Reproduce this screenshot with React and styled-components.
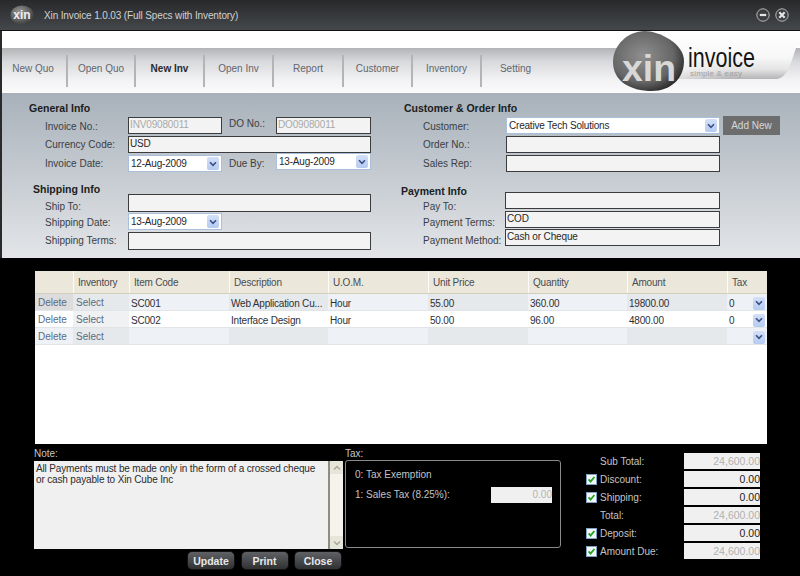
import React from 'react'
import styled, { createGlobalStyle } from 'styled-components'

const GlobalStyle = createGlobalStyle`
  html, body { margin: 0; padding: 0; background: #000; }
  body { font-family: "Liberation Sans", Arial, sans-serif; font-size: 10px; }
`

const Window = styled.div`
  position: relative;
  width: 800px;
  height: 576px;
  background: #000;
  overflow: hidden;
  color: #2c2f33;
`

const TitleBar = styled.div`
  display: flex;
  align-items: center;
  height: 31px;
  padding: 0 11px 0 10px;
  box-sizing: border-box;
  background: linear-gradient(#27292b, #45484b);
  border-bottom: 1px solid #111;
`

const TitleText = styled.div`
  margin-left: 10px;
  flex: 1;
  color: #d0d2d3;
  letter-spacing: -0.13px;
`

const WinControls = styled.div`
  display: flex;
  gap: 5px;
`

const Header = styled.div`
  position: relative;
  height: 62px;
  background: #fff;
  padding-top: 17px;
  box-sizing: border-box;
  box-shadow: inset 2px 0 0 #2a2a2a;
`

const Nav = styled.nav`
  display: flex;
  height: 45px;
  box-sizing: border-box;
  padding-top: 7px;
  background: linear-gradient(#b3b4b6 0, #d8d9dc 30%, #f2f2f4 70%, #fbfbfc 100%);
  box-shadow: inset 2px 0 0 #2a2a2a;
`

const NavItem = styled.div`
  width: ${(p) => p.$w}px;
  height: 32px;
  line-height: 27px;
  box-sizing: border-box;
  text-align: center;
  border-right: 2px solid ${(p) => (p.$last ? 'transparent' : '#b2b4b7')};
  color: ${(p) => (p.$active ? '#2a2c2e' : '#62666c')};
  font-weight: ${(p) => (p.$active ? 700 : 400)};
`

const Swoosh = styled.svg`
  position: absolute;
  right: 0;
  top: 0;
  width: 200px;
  height: 62px;
`

const Logo = styled.svg`
  position: absolute;
  left: 608px;
  top: -2px;
  width: 160px;
  height: 66px;
  overflow: visible;
`

const FormPanel = styled.div`
  display: flex;
  height: 165px;
  box-sizing: border-box;
  padding-top: 8px;
  background: linear-gradient(#a8b1ba, #e3e5e8);
  border-left: 2px solid #2a2a2a;
`

const FormCol = styled.div`
  display: flex;
  flex-direction: column;
  width: ${(p) => p.$w}px;
`

const Heading = styled.div`
  height: 14px;
  line-height: 14px;
  margin: ${(p) => p.$top || 0}px 0 ${(p) => p.$bottom ?? 2}px ${(p) => p.$left}px;
  font-size: 10.5px;
  font-weight: 700;
  color: #1b1d20;
`

const Row = styled.div`
  display: grid;
  grid-template-columns: ${(p) => p.$cols};
  align-items: start;
  height: ${(p) => p.$h || 17}px;
  margin-left: ${(p) => p.$left}px;
  margin-bottom: ${(p) => p.$gap ?? 2}px;
`

const Label = styled.div`
  line-height: 14px;
  padding-top: ${(p) => p.$drop ?? 2}px;
  padding-left: ${(p) => p.$indent || 0}px;
  color: #3a3e43;
  white-space: nowrap;
`

const Input = styled.div`
  height: ${(p) => p.$h || 17}px;
  line-height: 13px;
  margin-left: ${(p) => p.$pull || 0}px;
  box-sizing: border-box;
  padding-left: 1px;
  background: #f3f3f3;
  border: 1px solid #3a3c3e;
  border-top-width: 1.5px;
  letter-spacing: -0.15px;
  color: ${(p) => (p.$muted ? '#a9a9a9' : '#26282b')};
  white-space: nowrap;
  overflow: hidden;
`

const SelectBox = styled.div`
  display: flex;
  align-items: center;
  justify-content: space-between;
  height: 17px;
  margin-top: ${(p) => p.$up || 0}px;
  box-sizing: border-box;
  padding: 0 2px;
  background: #fff;
  border: 1px solid #a8c0dc;
  letter-spacing: -0.2px;
  color: #26282b;
`

const ArrowBtn = styled.span`
  display: flex;
  align-items: center;
  justify-content: center;
  width: 12px;
  height: 13px;
  background: linear-gradient(#d3e0f8, #b6cbf2);
  border-radius: 2px;
`

const AddNew = styled.div`
  width: 57px;
  height: 19px;
  line-height: 19px;
  margin: -1px 0 0 3px;
  text-align: center;
  background: #6d6d6d;
  color: #d8d8d8;
`

const Grid = styled.div`
  margin: 13px 0 0 35px;
  width: 732px;
  height: 173px;
  background: #fff;
`

const GridRow = styled.div`
  display: grid;
  grid-template-columns: 38px 56px 100px 99px 100px 100px 99px 100px 40px;
  height: ${(p) => (p.$head ? 23 : 17)}px;
  box-sizing: border-box;
  border-bottom: 1px solid ${(p) => (p.$head ? '#d3cfbd' : '#e2e5e8')};
`

const HeadCell = styled.div`
  display: flex;
  align-items: center;
  padding-left: 4px;
  background: #ebe7da;
  border-left: 1px solid ${(p) => (p.$first ? 'transparent' : '#fdfcf6')};
  letter-spacing: -0.2px;
  color: #4a4c50;
`

const Cell = styled.div`
  display: flex;
  align-items: center;
  justify-content: space-between;
  padding: ${(p) => (p.$link ? 0 : 2)}px 2px 0 ${(p) => (p.$link ? 3 : 2)}px;
  white-space: nowrap;
  overflow: hidden;
  letter-spacing: ${(p) => (p.$link ? 0 : -0.2)}px;
  background: ${(p) => p.$bg};
  color: ${(p) => (p.$link ? '#5a6b80' : '#2e3033')};
`

const Bottom = styled.div`
  display: flex;
  margin: 2px 0 0 34px;
`

const NoteCol = styled.div`
  width: 311px;
`

const SmallLabel = styled.div`
  height: 15px;
  line-height: 15px;
  color: #c6c6c6;
`

const NoteWrap = styled.div`
  display: flex;
  width: 309px;
  height: 88px;
`

const NoteText = styled.div`
  flex: 1;
  box-sizing: border-box;
  padding: 2px;
  line-height: 11px;
  letter-spacing: -0.15px;
  background: #f0f0f0;
  border-right: 2px solid #8d8d80;
  color: #2a2c2e;
`

const Scrollbar = styled.div`
  display: flex;
  flex-direction: column;
  justify-content: space-between;
  width: 13px;
  background: #f4f3ec;
`

const ScrollBtn = styled.span`
  display: flex;
  align-items: center;
  justify-content: center;
  height: 13px;
  background: #e6e5d9;
`

const Buttons = styled.div`
  display: flex;
  justify-content: flex-end;
  gap: 5.5px;
  margin-top: 2px;
  padding-right: 3px;
`

const Button = styled.div`
  width: 48px;
  height: 19px;
  line-height: 18px;
  text-align: center;
  border-radius: 5px;
  border: 1px solid #111;
  box-sizing: border-box;
  background: linear-gradient(#5f6164, #2f3133);
  color: #e8e8e8;
  font-weight: 700;
  font-size: 10.5px;
`

const TaxCol = styled.div`
  width: 216px;
`

const TaxBox = styled.div`
  height: 88px;
  box-sizing: border-box;
  padding: 5px 8px 5px 9px;
  margin-top: -1px;
  border: 1px solid #8a8a8a;
  border-radius: 3px;
  color: #c4c4c4;
`

const TaxLine = styled.div`
  display: flex;
  align-items: center;
  justify-content: space-between;
  height: 17px;
  margin-bottom: ${(p) => p.$gap || 0}px;
`

const TaxInput = styled.div`
  width: 61px;
  height: 16px;
  line-height: 16px;
  text-align: right;
  background: #f0f0f0;
  color: #b5b5b5;
`

const Totals = styled.div`
  display: grid;
  grid-template-columns: 14px 84px 76px;
  grid-auto-rows: 16px;
  row-gap: 2px;
  margin: 7px 0 0 25px;
  align-items: center;
  height: 106px;
`

const Check = styled.svg`
  width: 11px;
  height: 11px;
`

const TotalLabel = styled.div`
  color: #c4c4c4;
`

const TotalValue = styled.div`
  height: 16px;
  line-height: 16px;
  text-align: right;
  background: #f0f0f0;
  font-size: 10.5px;
  color: ${(p) => (p.$muted ? '#b0b0b0' : '#222')};
`

const Chevron = () => (
  <svg width="8" height="6" viewBox="0 0 8 6">
    <path d="M1 1.2 L4 4.4 L7 1.2" fill="none" stroke="#3c4f86" strokeWidth="1.6" />
  </svg>
)

const Select = ({ children, up }) => (
  <SelectBox $up={up}>
    <span>{children}</span>
    <ArrowBtn><Chevron /></ArrowBtn>
  </SelectBox>
)

const Tick = () => (
  <Check viewBox="0 0 11 11">
    <rect x="0.5" y="0.5" width="10" height="10" fill="#f4f6f8" stroke="#7fa3c8" />
    <path d="M2.6 5.4 L4.6 7.6 L8.4 3" fill="none" stroke="#23a322" strokeWidth="1.8" />
  </Check>
)

const navItems = [
  ['New Quo', 68], ['Open Quo', 68], ['New Inv', 69, true], ['Open Inv', 69],
  ['Report', 70], ['Customer', 69], ['Inventory', 69], ['Setting', 69],
]

const columns = ['', 'Inventory', 'Item Code', 'Description', 'U.O.M.', 'Unit Price', 'Quantity', 'Amount', 'Tax']

const rows = [
  ['SC001', 'Web Application Cu...', 'Hour', '55.00', '360.00', '19800.00', '0'],
  ['SC002', 'Interface Design', 'Hour', '50.00', '96.00', '4800.00', '0'],
  ['', '', '', '', '', '', ''],
]

const totals = [
  ['Sub Total:', '24,600.00', false, true],
  ['Discount:', '0.00', true, false],
  ['Shipping:', '0.00', true, false],
  ['Total:', '24,600.00', false, true],
  ['Deposit:', '0.00', true, false],
  ['Amount Due:', '24,600.00', true, true],
]

const leftCols = '83px 94px 54px 95px'
const wideCols = '83px 243px'
const rightCols = '83px 214px 60px'

export default function App() {
  return (
    <Window>
      <GlobalStyle />
      <TitleBar>
        <svg width="24" height="20" viewBox="0 0 24 20">
          <defs>
            <radialGradient id="sm" cx="0.4" cy="0.35" r="0.7">
              <stop offset="0" stopColor="#9a9a9a" />
              <stop offset="1" stopColor="#3a3a3a" />
            </radialGradient>
          </defs>
          <ellipse cx="12" cy="10" rx="11.5" ry="9.5" fill="url(#sm)" />
          <text x="12" y="14" textAnchor="middle" fontSize="12" fontWeight="700" fill="#eee" fontFamily="Liberation Sans">xin</text>
        </svg>
        <TitleText>Xin Invoice 1.0.03 (Full Specs with Inventory)</TitleText>
        <WinControls>
          <svg width="14" height="14" viewBox="0 0 14 14">
            <circle cx="7" cy="7" r="6.2" fill="#3c3e40" stroke="#b8b8b8" />
            <path d="M3.8 7 H10.2" stroke="#e4e4e4" strokeWidth="2.2" />
          </svg>
          <svg width="14" height="14" viewBox="0 0 14 14">
            <circle cx="7" cy="7" r="6.2" fill="#3c3e40" stroke="#b8b8b8" />
            <path d="M4.3 4.3 L9.7 9.7 M9.7 4.3 L4.3 9.7" stroke="#e4e4e4" strokeWidth="2.2" />
          </svg>
        </WinControls>
      </TitleBar>

      <Header>
        <Nav>
          {navItems.map(([name, w, active], i) => (
            <NavItem key={name} $w={w} $active={active} $last={i === navItems.length - 1}>{name}</NavItem>
          ))}
        </Nav>
        <Swoosh viewBox="0 0 200 62">
          <defs>
            <linearGradient id="sw" x1="0" y1="0" x2="0" y2="1">
              <stop offset="0" stopColor="#fff" />
              <stop offset="0.55" stopColor="#f7f7f8" />
              <stop offset="0.8" stopColor="#e4e4e5" />
              <stop offset="1" stopColor="#b4b4b6" />
            </linearGradient>
            <linearGradient id="swFade" x1="0" y1="0" x2="1" y2="0">
              <stop offset="0" stopColor="#fafafa" />
              <stop offset="1" stopColor="#fafafa" stopOpacity="0" />
            </linearGradient>
          </defs>
          <path d="M40 0 H200 V14 H197 C192 28 188 48 176 48 H40 Z" fill="url(#sw)" />
          <rect x="40" y="16" width="90" height="32" fill="url(#swFade)" />
        </Swoosh>
        <Logo viewBox="0 0 160 66">
          <defs>
            <radialGradient id="blob" cx="0.42" cy="0.42" r="0.62">
              <stop offset="0" stopColor="#8f8f8f" />
              <stop offset="0.7" stopColor="#666" />
              <stop offset="1" stopColor="#2e2e2e" />
            </radialGradient>
          </defs>
          <path d="M5 33 C5 16 20 2 37 2 C50 2 76 14 76 32 C76 50 62 62 44 62 C22 62 5 52 5 33 Z" fill="url(#blob)" />
          <text x="41" y="52" textAnchor="middle" fontSize="37" fontWeight="700" fill="#d8d8d8" fontFamily="Liberation Sans" textLength="54" lengthAdjust="spacingAndGlyphs">xin</text>
          <text x="80" y="38" fontSize="27" fill="#151515" fontFamily="Liberation Sans" textLength="67" lengthAdjust="spacingAndGlyphs">invoice</text>
          <text x="82" y="47" fontSize="8" fill="#a0a0a0" fontFamily="Liberation Sans" textLength="52">simple &amp; easy</text>
        </Logo>
      </Header>

      <FormPanel>
        <FormCol $w={398}>
          <Heading $left={27}>General Info</Heading>
          <Row $cols={leftCols} $left={43}>
            <Label $drop={3}>Invoice No.:</Label>
            <Input $muted>INV09080011</Input>
            <Label $drop={0} $indent={7}>DO No.:</Label>
            <Input $muted>DO09080011</Input>
          </Row>
          <Row $cols={wideCols} $left={43}>
            <Label>Currency Code:</Label>
            <Input>USD</Input>
          </Row>
          <Row $cols={leftCols} $left={43} $gap={0}>
            <Label>Invoice Date:</Label>
            <Select>12-Aug-2009</Select>
            <Label $indent={7}>Due By:</Label>
            <Select up={-2}>13-Aug-2009</Select>
          </Row>
          <Heading $left={31} $top={10} $bottom={-2}>Shipping Info</Heading>
          <Row $cols={wideCols} $left={43} $h={18} $gap={1}>
            <Label $drop={6}>Ship To:</Label>
            <Input $h={18} />
          </Row>
          <Row $cols={leftCols} $left={43}>
            <Label $drop={3}>Shipping Date:</Label>
            <Select>13-Aug-2009</Select>
          </Row>
          <Row $cols={wideCols} $left={43} $h={18}>
            <Label>Shipping Terms:</Label>
            <Input $h={18} />
          </Row>
        </FormCol>
        <FormCol $w={399}>
          <Heading $left={4}>Customer &amp; Order Info</Heading>
          <Row $cols={rightCols} $left={23}>
            <Label $drop={3}>Customer:</Label>
            <Select>Creative Tech Solutions</Select>
            <AddNew>Add New</AddNew>
          </Row>
          <Row $cols={rightCols} $left={23}>
            <Label>Order No.:</Label>
            <Input />
          </Row>
          <Row $cols={rightCols} $left={23} $gap={0}>
            <Label>Sales Rep:</Label>
            <Input />
          </Row>
          <Heading $left={1} $top={12} $bottom={-6}>Payment Info</Heading>
          <Row $cols={rightCols} $left={23}>
            <Label $drop={8}>Pay To:</Label>
            <Input $pull={-1} />
          </Row>
          <Row $cols={rightCols} $left={23} $gap={1}>
            <Label $drop={5}>Payment Terms:</Label>
            <Input $pull={-1}>COD</Input>
          </Row>
          <Row $cols={rightCols} $left={23}>
            <Label $drop={5}>Payment Method:</Label>
            <Input $pull={-1}>Cash or Cheque</Input>
          </Row>
        </FormCol>
      </FormPanel>

      <Grid>
        <GridRow $head>
          {columns.map((c, i) => <HeadCell key={i} $first={i === 0}>{c}</HeadCell>)}
        </GridRow>
        {rows.map((row, i) => {
          const odd = i % 2 === 0
          const bg = (alt) => (odd ? (alt ? '#e6e9ec' : '#eef2f6') : '#fff')
          return (
            <GridRow key={i}>
              <Cell $link $bg={i === 0 ? '#dcdcdc' : bg(false)}>Delete</Cell>
              <Cell $link $bg={odd ? '#e6e9ec' : '#f0f1f2'}>Select</Cell>
              {row.slice(0, 6).map((v, j) => (
                <Cell key={j} $bg={bg(j % 2 === 1)}>{v}</Cell>
              ))}
              <Cell $bg={bg(false)}>
                <span>{row[6]}</span>
                <ArrowBtn><Chevron /></ArrowBtn>
              </Cell>
            </GridRow>
          )
        })}
      </Grid>

      <Bottom>
        <NoteCol>
          <SmallLabel>Note:</SmallLabel>
          <NoteWrap>
            <NoteText>
              All Payments must be made only in the form of a crossed cheque or cash payable to Xin Cube Inc
            </NoteText>
            <Scrollbar>
              <ScrollBtn>
                <svg width="8" height="6" viewBox="0 0 8 6"><path d="M1 4.5 L4 1.5 L7 4.5" fill="none" stroke="#a8a89a" strokeWidth="1.5" /></svg>
              </ScrollBtn>
              <ScrollBtn>
                <svg width="8" height="6" viewBox="0 0 8 6"><path d="M1 1.5 L4 4.5 L7 1.5" fill="none" stroke="#a8a89a" strokeWidth="1.5" /></svg>
              </ScrollBtn>
            </Scrollbar>
          </NoteWrap>
          <Buttons>
            <Button>Update</Button>
            <Button>Print</Button>
            <Button>Close</Button>
          </Buttons>
        </NoteCol>
        <TaxCol>
          <SmallLabel>Tax:</SmallLabel>
          <TaxBox>
            <TaxLine $gap={3}>0: Tax Exemption</TaxLine>
            <TaxLine>
              <span>1: Sales Tax (8.25%):</span>
              <TaxInput>0.00</TaxInput>
            </TaxLine>
          </TaxBox>
        </TaxCol>
        <Totals>
          {totals.map(([label, value, check, muted]) => (
            <React.Fragment key={label}>
              {check ? <Tick /> : <span />}
              <TotalLabel>{label}</TotalLabel>
              <TotalValue $muted={muted}>{value}</TotalValue>
            </React.Fragment>
          ))}
        </Totals>
      </Bottom>
    </Window>
  )
}
